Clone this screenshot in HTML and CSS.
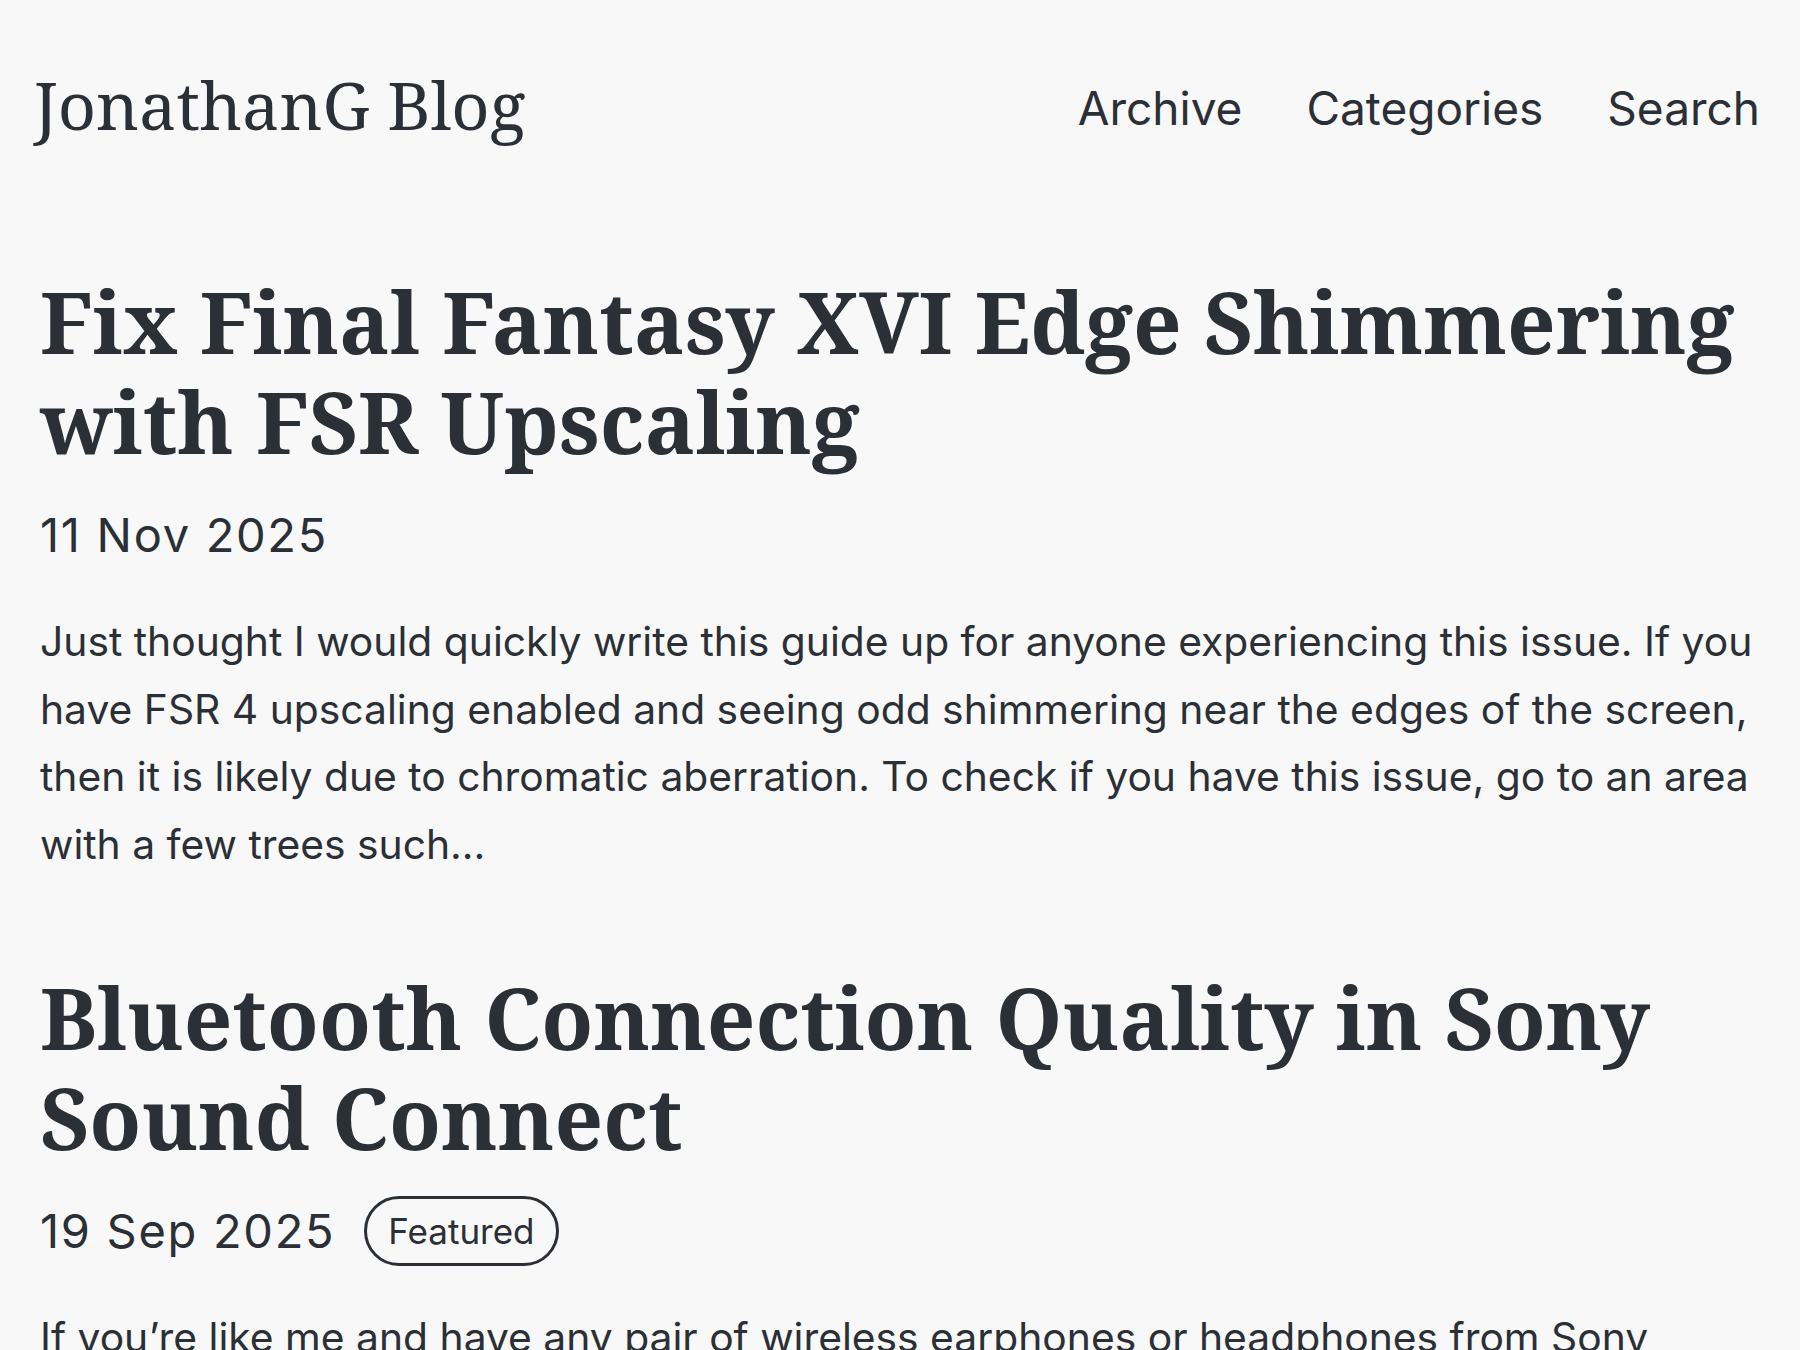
FILE: index.html
```html
<!DOCTYPE html>
<html lang="en">
<head>
<meta charset="utf-8">
<title>JonathanG Blog</title>
<link rel="stylesheet" href="styles.css">
</head>
<body>
<div class="page">
  <header class="site-header">
    <a class="logo" href="#">JonathanG Blog</a>
    <nav class="nav">
      <a href="#">Archive</a>
      <a href="#">Categories</a>
      <a href="#">Search</a>
    </nav>
  </header>
  <main class="posts">
    <article class="post">
      <h2 class="post-title"><a href="#">Fix Final Fantasy XVI Edge Shimmering with FSR Upscaling</a></h2>
      <div class="post-meta"><time>11 Nov 2025</time></div>
      <p class="post-summary">Just thought I would quickly write this guide up for anyone experiencing this issue. If you have FSR 4 upscaling enabled and seeing odd shimmering near the edges of the screen, then it is likely due to chromatic aberration. To check if you have this issue, go to an area with a few trees such…</p>
    </article>
    <article class="post">
      <h2 class="post-title"><a href="#">Bluetooth Connection Quality in Sony Sound Connect</a></h2>
      <div class="post-meta"><time>19 Sep 2025</time><span class="badge">Featured</span></div>
      <p class="post-summary">If you’re like me and have any pair of wireless earphones or headphones from Sony manufactured in the last few years, you have probably used the Sound Connect app to tweak settings…</p>
    </article>
  </main>
</div>
</body>
</html>
```
FILE: styles.css
```css
* { box-sizing: border-box; }
html, body { margin: 0; padding: 0; }
body {
  background: #f8f8f8;
  color: #2b2f36;
  font-family: "Inter", "Open Sans", sans-serif;
}
a { color: inherit; text-decoration: none; }
.page {
  padding: 0 40px;
}
.site-header {
  display: flex;
  justify-content: space-between;
  align-items: flex-start;
  padding-top: 65px;
}
.logo {
  font-family: "Noto Serif", "Liberation Serif", serif;
  font-weight: 400;
  font-size: 66.5px;
  line-height: 79px;
  margin-left: -6px;
}
.nav {
  display: flex;
  gap: 64px;
  padding-top: 9px;
  font-size: 46px;
  line-height: 69px;
}
.posts {
  padding-top: 127px;
}
.post + .post { margin-top: 89px; }
.post-title {
  margin: 0;
  font-family: "Noto Serif", "Liberation Serif", serif;
  font-weight: 700;
  font-size: 85px;
  line-height: 100px;
}
.post-meta {
  display: flex;
  align-items: center;
  gap: 29px;
  margin-top: 29px;
  font-size: 47px;
  line-height: 70px;
  letter-spacing: 1.7px;
}
.badge {
  display: inline-block;
  border: 3px solid #2b2f36;
  border-radius: 999px;
  padding: 0 21px;
  font-size: 35px;
  line-height: 64px;
  letter-spacing: 0;
}
.post-summary {
  margin: 38px 0 0;
  font-size: 40.8px;
  line-height: 67.5px;
}
```
